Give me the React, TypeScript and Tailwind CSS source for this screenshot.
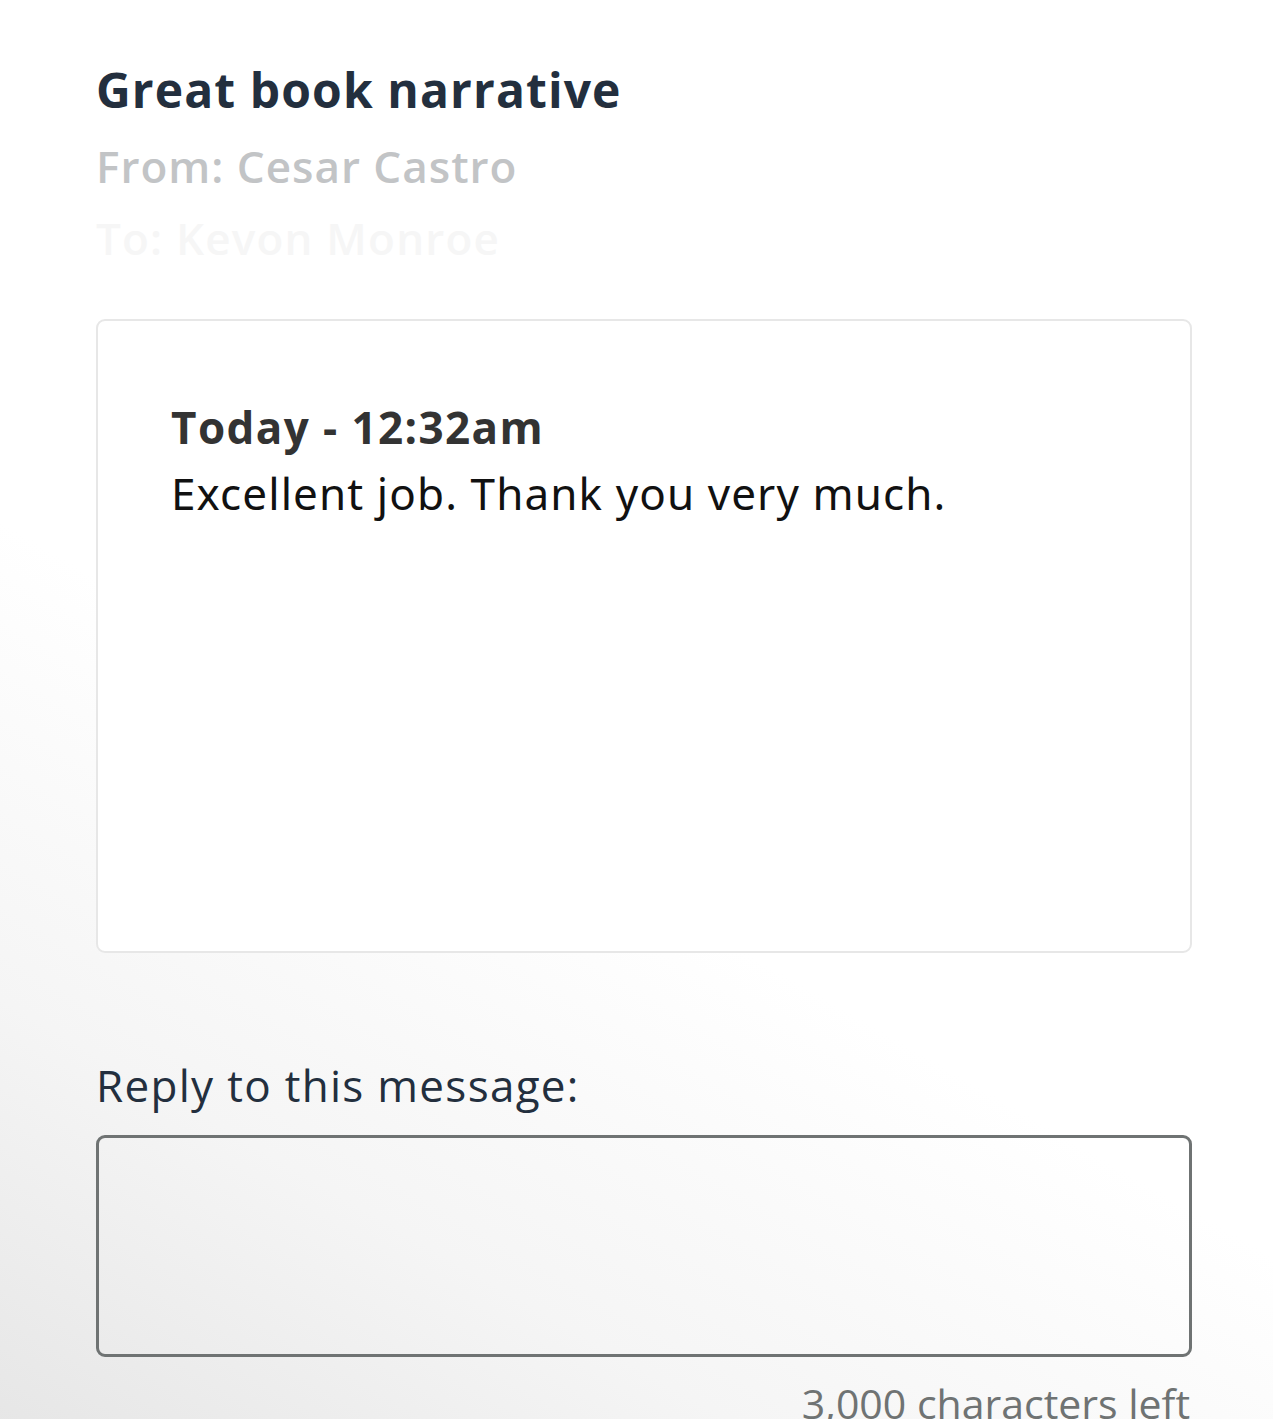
import React from 'react';

export default function App() {
  return (
    <div className="min-h-[1419px] w-full bg-[linear-gradient(30deg,#e6e6e6_0%,#f5f5f5_20%,#ffffff_42%)] pl-[96px] pr-[81px] pt-[58px] font-['Open_Sans',sans-serif] overflow-hidden">
      <h1 className="text-[48px] font-bold leading-[64px] text-[#232f3e] tracking-[1.1px]">Great book narrative</h1>
      <div className="mt-[14px] text-[44px] font-semibold leading-[60px] text-[#c2c4c6] tracking-[1px]">From: Cesar Castro</div>
      <div className="mt-[12px] text-[44px] font-semibold leading-[60px] text-[#f6f6f6] tracking-[1.2px]">To: Kevon Monroe</div>

      <div className="mt-[51px] h-[634px] rounded-[9px] border-2 border-[#e7e7e7] bg-white px-[73px] pt-[78px]">
        <div className="text-[44px] font-bold leading-[56px] text-[#333333] tracking-[1.4px]">Today - 12:32am</div>
        <p className="mt-[10px] text-[44px] leading-[56px] text-[#111111] font-['Noto_Sans',sans-serif] tracking-[1.1px]">Excellent job. Thank you very much.</p>
      </div>

      <label className="mt-[102px] block text-[44px] leading-[60px] text-[#232f3e] tracking-[1.3px]">Reply to this message:</label>
      <textarea className="mt-[20px] block h-[222px] w-full resize-none rounded-[9px] border-[3px] border-[#6f7373] bg-transparent outline-none" />
      <div className="mt-[18px] text-right text-[41px] leading-[56px] text-[#6f7373] pr-[2px]">3,000 characters left</div>
    </div>
  );
}
